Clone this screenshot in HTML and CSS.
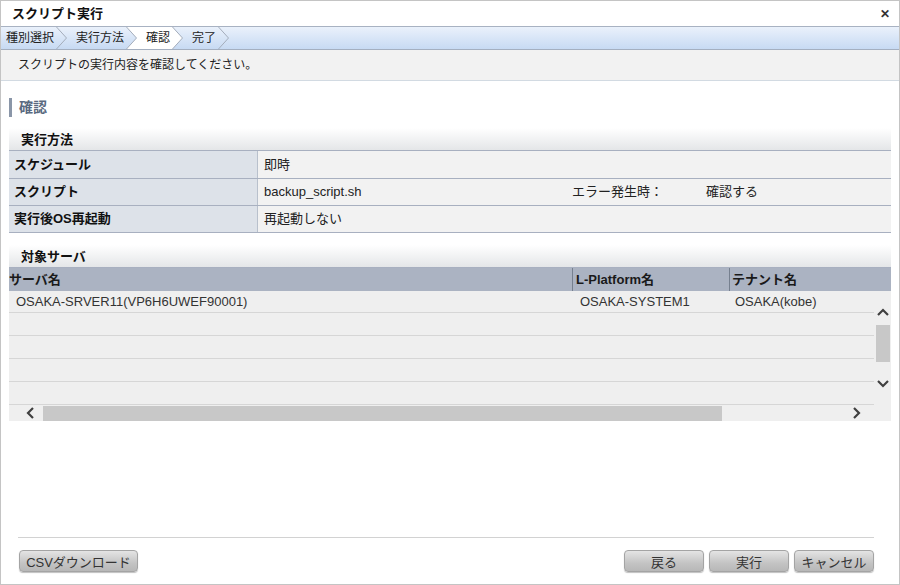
FILE: index.html
```html
<!DOCTYPE html>
<html lang="ja">
<head>
<meta charset="utf-8">
<title>スクリプト実行</title>
<link rel="stylesheet" href="styles.css">
</head>
<body>
<div class="window">
  <div class="titlebar">
    <span class="title">スクリプト実行</span>
    <span class="close">✕</span>
  </div>
  <div class="crumbs">
    <span class="step">種別選択</span>
    <svg class="sep" width="12" height="22" viewBox="0 0 12 22"><polyline points="0.5,0 10.5,11 0.5,22" fill="none" stroke="#a4adbb" stroke-width="1"/></svg>
    <span class="step">実行方法</span>
    <svg class="sep" width="12" height="22" viewBox="0 0 12 22"><polygon points="0.5,0 12,0 12,22 0.5,22 10.5,11" fill="#fff"/><polyline points="0.5,0 10.5,11 0.5,22" fill="none" stroke="#a4adbb" stroke-width="1"/></svg>
    <span class="step active">確認</span>
    <svg class="sep" width="12" height="22" viewBox="0 0 12 22"><polygon points="0,0 0.5,0 10.5,11 0.5,22 0,22" fill="#fff"/><polyline points="0.5,0 10.5,11 0.5,22" fill="none" stroke="#a4adbb" stroke-width="1"/></svg>
    <span class="step">完了</span>
    <svg class="sep" width="12" height="22" viewBox="0 0 12 22"><polyline points="0.5,0 10.5,11 0.5,22" fill="none" stroke="#a4adbb" stroke-width="1"/></svg>
  </div>
  <div class="message">スクリプトの実行内容を確認してください。</div>
  <div class="content">
    <h2 class="heading">確認</h2>
    <div class="band">実行方法</div>
    <div class="props">
      <div class="prow"><div class="pl">スケジュール</div><div class="pv">即時</div></div>
      <div class="prow"><div class="pl">スクリプト</div><div class="pv"><span class="v1">backup_script.sh</span><span class="v2">エラー発生時：</span><span class="v3">確認する</span></div></div>
      <div class="prow"><div class="pl">実行後OS再起動</div><div class="pv">再起動しない</div></div>
    </div>
    <div class="band band2">対象サーバ</div>
    <div class="grid">
      <div class="ghead">
        <div class="gc c1">サーバ名</div>
        <div class="gc c2">L-Platform名</div>
        <div class="gc c3">テナント名</div>
      </div>
      <div class="gbody">
        <div class="rows">
          <div class="row"><div class="rc c1">OSAKA-SRVER11(VP6H6UWEF90001)</div><div class="rc c2">OSAKA-SYSTEM1</div><div class="rc c3">OSAKA(kobe)</div></div>
          <div class="row"></div>
          <div class="row"></div>
          <div class="row"></div>
          <div class="row"></div>
        </div>
        <div class="vscroll">
          <svg class="arr up" width="14" height="10" viewBox="0 0 14 10"><polyline points="2,8 7,3 12,8" fill="none" stroke="#404040" stroke-width="2.2"/></svg>
          <div class="vthumb"></div>
          <svg class="arr down" width="14" height="10" viewBox="0 0 14 10"><polyline points="2,2 7,7 12,2" fill="none" stroke="#404040" stroke-width="2.2"/></svg>
        </div>
      </div>
      <div class="hscroll">
        <svg class="harr" width="10" height="14" viewBox="0 0 10 14"><polyline points="8,2 3,7 8,12" fill="none" stroke="#404040" stroke-width="2.2"/></svg>
        <div class="hthumb"></div>
        <div class="hspace"></div>
        <svg class="harr" width="10" height="14" viewBox="0 0 10 14"><polyline points="2,2 7,7 2,12" fill="none" stroke="#404040" stroke-width="2.2"/></svg>
        <div class="corner"></div>
      </div>
    </div>
  </div>
  <div class="footer">
    <div class="fline"></div>
    <div class="buttons">
      <button class="btn csv">CSVダウンロード</button>
      <div class="spacer"></div>
      <button class="btn">戻る</button>
      <button class="btn">実行</button>
      <button class="btn">キャンセル</button>
    </div>
  </div>
</div>
</body>
</html>
```
FILE: styles.css
```css
* { box-sizing: border-box; }
html, body { margin: 0; padding: 0; background: #fff; }
body {
  font-family: "Liberation Sans", "Noto Sans CJK JP", sans-serif;
  font-size: 12px;
  line-height: 16px;
  color: #222;
}
.window {
  width: 900px;
  height: 585px;
  border: 1px solid #c4c4c4;
  display: flex;
  flex-direction: column;
  background: #fff;
}
.titlebar {
  height: 26px;
  flex: none;
  display: flex;
  align-items: center;
  justify-content: space-between;
  padding: 0 9px 0 11px;
  border-bottom: 1px solid #a8b2c2;
}
.title { font-size: 13px; font-weight: bold; color: #111; }
.close { font-size: 12px; font-weight: bold; color: #333; }
.crumbs {
  height: 23px;
  flex: none;
  display: flex;
  align-items: stretch;
  background: linear-gradient(#eaf1fb, #c7daf3);
  border-bottom: 1px solid #a4afc0;
}
.step {
  display: flex;
  align-items: center;
  padding: 0 2px 0 8px;
  color: #222;
}
.step:first-child { padding-left: 5px; }
.step.active { background: #fff; padding: 0 2px 0 8px; }
.sep { flex: none; display: block; height: 22px; }
.message {
  height: 31px;
  flex: none;
  display: flex;
  align-items: center;
  padding-left: 17px;
  background: #f2f2f2;
  border-bottom: 1px solid #d2dae2;
}
.content { padding: 17px 8px 0 8px; }
.heading {
  margin: 0 0 11px 0;
  height: 19px;
  border-left: 3px solid #8a96a8;
  padding-left: 7px;
  font-size: 14px;
  font-weight: bold;
  color: #5a6a80;
  line-height: 19px;
}
.band {
  height: 23px;
  padding: 3px 0 0 12px;
  font-size: 13px;
  font-weight: bold;
  color: #111;
  background: linear-gradient(#ffffff, #e4e6e8);
  border-bottom: 1px solid #a8b0c0;
  line-height: 18px;
}
.band2 { margin-top: 12px; }
.props { font-size: 13px; }
.prow {
  height: 27px;
  display: flex;
  border-bottom: 1px solid #a8b0c0;
}
.prow:first-child { height: 28px; }
.pl {
  width: 249px;
  flex: none;
  background: #dde2e9;
  border-right: 1px solid #b8c0cc;
  padding-left: 5px;
  font-weight: bold;
  color: #111;
  display: flex;
  align-items: center;
}
.pv {
  flex: 1;
  background: #f2f2f2;
  padding-left: 6px;
  color: #222;
  display: flex;
  align-items: center;
}
.v1 { width: 308px; }
.v2 { width: 134px; }
.grid { background: #efefef; font-size: 13px; }
.ghead {
  height: 23px;
  display: flex;
  background: #abb3c2;
}
.gc {
  display: flex;
  align-items: center;
  font-weight: bold;
  color: #1a1a1a;
}
.ghead .c1 { width: 564px; padding-left: 0; border-right: 1px solid #76808f; }
.ghead .c2 { width: 157px; padding-left: 3px; border-right: 1px solid #76808f; }
.ghead .c3 { padding-left: 2px; }
.gbody { display: flex; }
.rows { width: 866px; }
.row {
  height: 23px;
  display: flex;
  border-bottom: 1px solid #d6d6d6;
}
.row:first-child { height: 22px; }
.rc { display: flex; align-items: center; color: #333; }
.row .c1 { width: 564px; padding-left: 7px; }
.row .c2 { width: 157px; padding-left: 7px; }
.row .c3 { padding-left: 5px; }
.vscroll {
  width: 17px;
  display: flex;
  flex-direction: column;
  align-items: center;
}
.arr { display: block; flex: none; }
.arr.up { margin-top: 16px; }
.vthumb { width: 14px; height: 37px; background: #c8c8c8; margin: 8px 0 17px 0; }
.hscroll {
  height: 16px;
  display: flex;
  align-items: center;
}
.harr { display: block; flex: none; margin: 0 12px 0 16px; }
.hthumb { width: 691px; height: 15px; background: #c8c8c8; margin-left: -4px; }
.hspace { width: 116px; }
.corner { width: 17px; }
.footer { margin-top: auto; }
.fline { height: 1px; background: #d2d2d2; margin: 0 25px 0 17px; }
.buttons {
  display: flex;
  padding: 12px 25px 12px 18px;
  gap: 5px;
}
.spacer { flex: 1; }
.btn {
  height: 22px;
  width: 80px;
  border: 1px solid #a4a4a4;
  border-radius: 4px;
  background: linear-gradient(#e4e4e4, #c4c4c4 60%, #b8b8b8);
  font-family: "Liberation Sans", "Noto Sans CJK JP", sans-serif;
  font-size: 13px;
  font-weight: 400;
  color: #333;
  padding: 0;
  box-shadow: 0 1px 1px rgba(0,0,0,0.25);
}
.btn.csv { width: 119px; }
```
